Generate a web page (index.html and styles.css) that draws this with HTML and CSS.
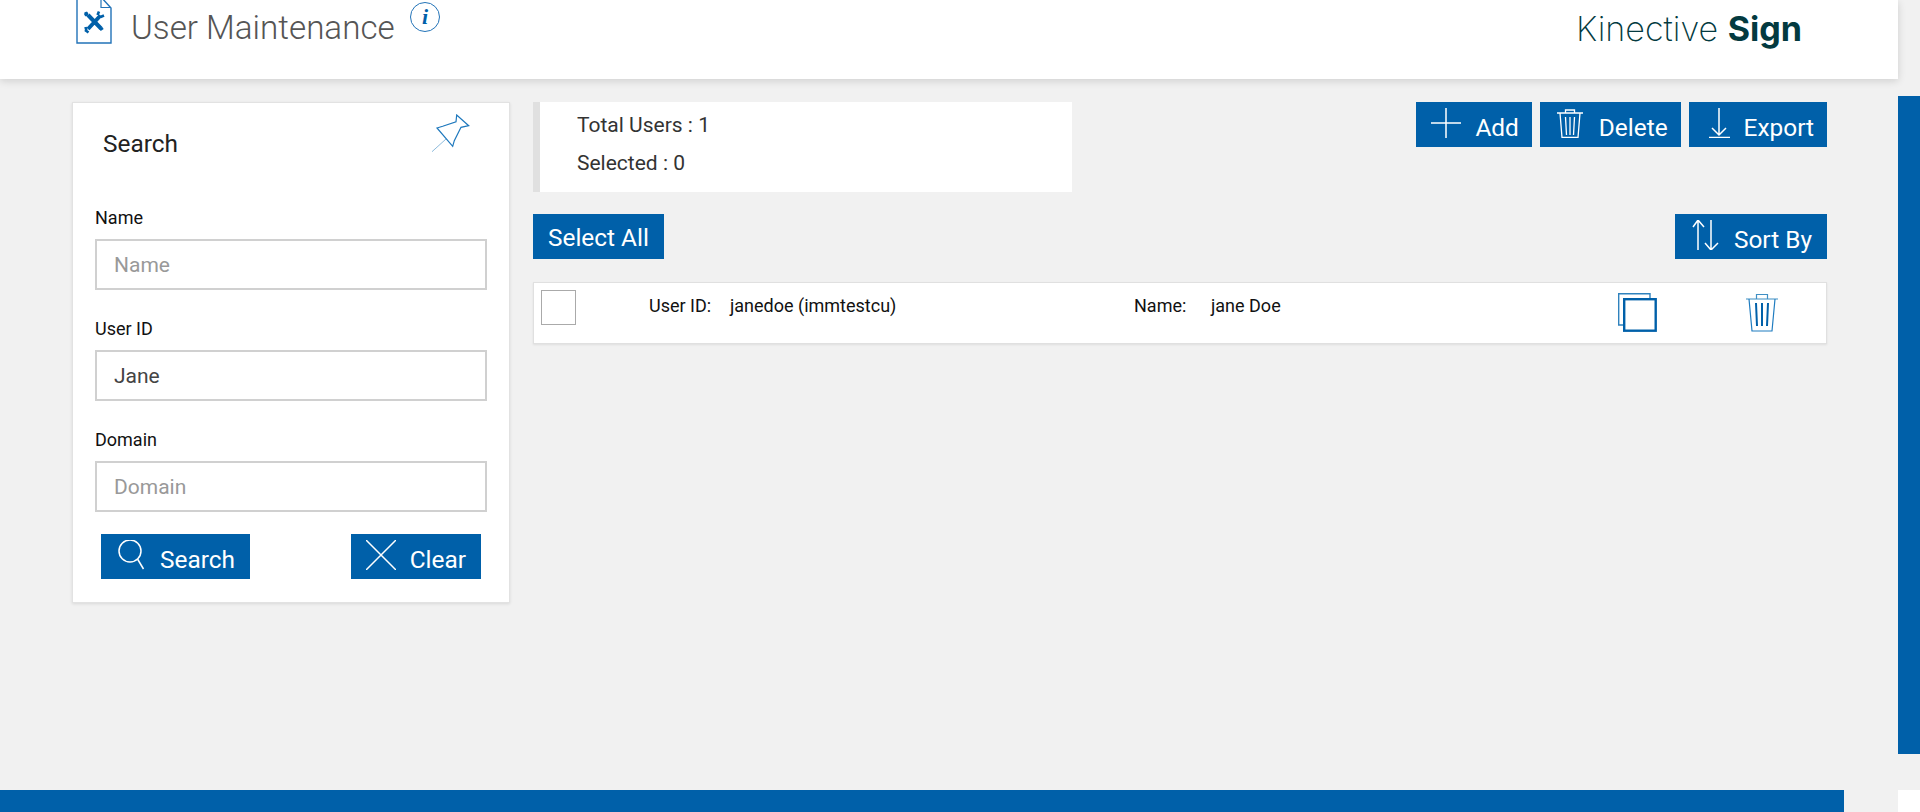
FILE: index.html
```html
<!DOCTYPE html>
<html lang="en">
<head>
<meta charset="utf-8">
<title>User Maintenance</title>
<link rel="stylesheet" href="styles.css">
</head>
<body>
<div class="page">
  <div class="main">
    <header class="header">
      <svg class="doc-icon" width="36" height="44" viewBox="0 0 36 44" fill="none">
        <path d="M1 -4V43H35V8L25 -3" stroke="#2273b8" stroke-width="1.4"/>
        <path d="M25 -2V7.5H35" stroke="#2273b8" stroke-width="1.2"/>
        <path d="M12 29L24.5 15.5M12 15L25 28.5" stroke="#0060a9" stroke-width="4"/>
        <path d="M21.5 15L23 11.5M24.5 17L28 15.5M8.5 15L12 13M9.5 12L11 16M9 30L12.5 32.5M9.5 27L10.5 31M24 30L27 28" stroke="#0060a9" stroke-width="2.6"/>
      </svg>
      <h1 class="page-title">User Maintenance</h1>
      <svg class="info-icon" width="32" height="32" viewBox="0 0 32 32">
        <circle cx="16" cy="16" r="14.5" fill="none" stroke="#2273b8" stroke-width="1"/>
        <text x="16" y="22.5" class="info-i" text-anchor="middle">i</text>
      </svg>
      <div class="brand">Kinective <b>Sign</b></div>
    </header>
    <div class="content">
      <aside class="search-card">
        <div class="card-head">
          <h2 class="card-title">Search</h2>
          <svg class="pin" width="40" height="40" viewBox="0 0 40 40" fill="none">
            <path d="M6 14L11.7 12.3L25 7.7L25.7 1L37.7 11.7L30 13.3L23.3 26.7L21.7 32.3Z" stroke="#1e78bd" stroke-width="1.2"/>
            <path d="M1 37.7L15 25" stroke="#8dbbdc" stroke-width="1"/>
          </svg>
        </div>
        <label class="field">
          <span class="field-label">Name</span>
          <input class="field-input" type="text" placeholder="Name">
        </label>
        <label class="field">
          <span class="field-label">User ID</span>
          <input class="field-input" type="text" value="Jane">
        </label>
        <label class="field field-last">
          <span class="field-label">Domain</span>
          <input class="field-input" type="text" placeholder="Domain">
        </label>
        <div class="card-actions">
          <button class="btn">
            <svg width="30" height="30" viewBox="0 0 30 30" fill="none" stroke="#fff" stroke-width="1.5"><circle cx="14" cy="11" r="11"/><path d="M21.5 19L27.5 29"/></svg>
            <span class="btn-text">Search</span>
          </button>
          <button class="btn">
            <svg width="30" height="30" viewBox="0 0 30 30" fill="none" stroke="#fff" stroke-width="1.5"><path d="M0 0L30 30M30 0L0 30"/></svg>
            <span class="btn-text">Clear</span>
          </button>
        </div>
      </aside>
      <section class="users">
        <div class="top-row">
          <div class="stats">
            <div class="stat">Total Users : 1</div>
            <div class="stat">Selected : 0</div>
          </div>
          <div class="actions">
            <button class="btn">
              <svg width="30" height="30" viewBox="0 0 30 30" fill="none" stroke="#fff" stroke-width="1.5"><path d="M0 15H30M15 0V30"/></svg>
              <span class="btn-text">Add</span>
            </button>
            <button class="btn">
              <svg width="30" height="30" viewBox="0 0 30 30" fill="none" stroke="#fff" stroke-width="1.3"><path d="M2 5H28M10.5 5V2H19.5V5M5 5L7 29.5H23L25 5M10.5 9L11.5 27M15 9V27M19.5 9L18.5 27"/></svg>
              <span class="btn-text">Delete</span>
            </button>
            <button class="btn">
              <svg width="26" height="30" viewBox="0 0 26 30" fill="none" stroke="#fff" stroke-width="1.5"><path d="M15 0V27M8 20L15 27L22 20M5 29.5H26"/></svg>
              <span class="btn-text">Export</span>
            </button>
          </div>
        </div>
        <div class="tool-row">
          <button class="btn btn-plain"><span>Select All</span></button>
          <button class="btn">
            <svg width="30" height="30" viewBox="0 0 30 30" fill="none" stroke="#fff" stroke-width="1.5"><path d="M8 30V0M3 7L8 0L14 7M21 0V30M15 23L21 30L28 23"/></svg>
            <span class="btn-text">Sort By</span>
          </button>
        </div>
        <div class="user-row">
          <span class="check"></span>
          <span class="cell-label cell-uid">User ID:</span>
          <span class="cell-value cell-uid-value">janedoe (immtestcu)</span>
          <span class="cell-label cell-name">Name:</span>
          <span class="cell-value cell-name-value">jane Doe</span>
          <svg class="copy-icon" width="39" height="39" viewBox="0 0 39 39" fill="none">
            <path d="M6 32H0.7V0.7H32V6" stroke="#2f82bd" stroke-width="1.4"/>
            <rect x="6.2" y="6.2" width="31.5" height="31.5" stroke="#0060a9" stroke-width="2.4"/>
          </svg>
          <svg class="trash-icon" width="34" height="40" viewBox="0 0 34 40" fill="none">
            <path d="M1 6H33M11.5 6V1.5H22.5V6" stroke="#3f8fc4" stroke-width="1.2"/>
            <path d="M4 6L7 38H27L30 6" stroke="#1f7cc0" stroke-width="1.2"/>
            <path d="M11 10L12 33M17 10V33M23 10L22 33" stroke="#0060a9" stroke-width="2"/>
          </svg>
        </div>
      </section>
    </div>
    <footer class="footer"></footer>
  </div>
  <div class="rail">
    <div class="rail-thumb"></div>
    <div class="rail-corner"></div>
  </div>
</div>
</body>
</html>
```

FILE: styles.css
```css
* { box-sizing: border-box; }
html, body { margin: 0; height: 100%; overflow: hidden; }
body { background: #f1f1f1; font-family: Roboto, "Liberation Sans", sans-serif; color: #222; }
.page { display: flex; width: 1920px; height: 812px; }
.main { width: 1898px; display: flex; flex-direction: column; }

.header { height: 79px; flex: none; background: #fff; box-shadow: 0 2px 8px rgba(0,0,0,.14); display: flex; align-items: flex-start; padding: 0 96px 0 76px; position: relative; }
.doc-icon { flex: none; }
.page-title { margin: 8px 0 0 19px; font-size: 33.2px; line-height: 40px; font-weight: 300; color: #555; }
.info-icon { flex: none; margin: 1px 0 0 14px; }
.info-i { font-family: "Liberation Serif", serif; font-style: italic; font-weight: 700; font-size: 22px; fill: #0060a9; }
.brand { margin: 9px 0 0 auto; font-family: Inter, sans-serif; font-size: 34.1px; line-height: 40px; font-weight: 200; color: #033a40; }
.brand b { font-weight: 700; }

.content { flex: 1; display: flex; align-items: flex-start; padding: 23px 71px 0 72px; gap: 23px; }

.search-card { width: 438px; flex: none; background: #fff; border: 1px solid #e2e2e2; box-shadow: 0 1px 3px rgba(0,0,0,.1); padding: 0 22px 23px; }
.card-head { height: 102px; display: flex; justify-content: space-between; align-items: flex-start; padding: 11px 16px 0 8px; }
.card-title { margin: 16px 0 0; font-size: 24.4px; line-height: 28px; font-weight: 400; color: #222; }
.field { display: block; margin-bottom: 26px; }
.field-last { margin-bottom: 22px; }
.field-label { display: block; font-size: 18px; line-height: 24px; padding-top: 1px; margin-bottom: 9px; color: #111; }
.field-input { display: block; width: 100%; height: 51px; border: 2px solid #d0d0d0; background: #fff; padding: 0 17px; font-family: inherit; font-size: 21px; color: #444; outline: none; }
.field-input::placeholder { color: #999; opacity: 1; }

.card-actions { display: flex; justify-content: space-between; padding: 0 6px; }

.btn { display: flex; align-items: flex-start; gap: 14px; height: 45px; padding: 6px 15px 0; border: 0; background: #0060a9; color: #fff; font-family: inherit; font-size: 24.4px; line-height: 28px; }
.btn svg { flex: none; }
.btn-text { margin-top: 6px; }
.btn-plain { padding-top: 1px; line-height: 45px; }

.users { flex: 1; min-width: 0; }
.top-row { display: flex; justify-content: space-between; align-items: flex-start; }
.stats { width: 539px; height: 90px; background: #fff; border-left: 7px solid #e0e0e0; padding: 4px 0 0 37px; }
.stat { font-size: 21px; line-height: 38px; color: #333; }
.actions { display: flex; gap: 8px; }
.actions .btn { padding-right: 13px; }
.tool-row { display: flex; justify-content: space-between; margin-top: 22px; }

.user-row { margin-top: 23px; height: 62px; background: #fff; border: 1px solid #e0e0e0; box-shadow: 0 1px 2px rgba(0,0,0,.08); display: flex; align-items: flex-start; padding: 7px 0 0 7px; font-size: 18px; line-height: 24px; color: #111; }
.check { width: 35px; height: 35px; flex: none; border: 1px solid #aaa; background: #fff; }
.cell-uid { margin: 4px 0 0 73px; width: 81px; }
.cell-uid-value { margin-top: 4px; width: 404px; }
.cell-name { margin-top: 4px; width: 77px; }
.cell-name-value { margin-top: 4px; width: 407px; }
.copy-icon { margin: 3px 0 0 0; flex: none; }
.trash-icon { margin: 3px 0 0 88px; flex: none; }

.footer { width: 1844px; height: 22px; flex: none; margin-top: auto; background: #0060a9; }

.rail { width: 22px; flex: none; display: flex; flex-direction: column; }
.rail-thumb { margin-top: 96px; height: 658px; background: #0060a9; }
.rail-corner { margin-top: auto; height: 22px; background: #fff; }
```
